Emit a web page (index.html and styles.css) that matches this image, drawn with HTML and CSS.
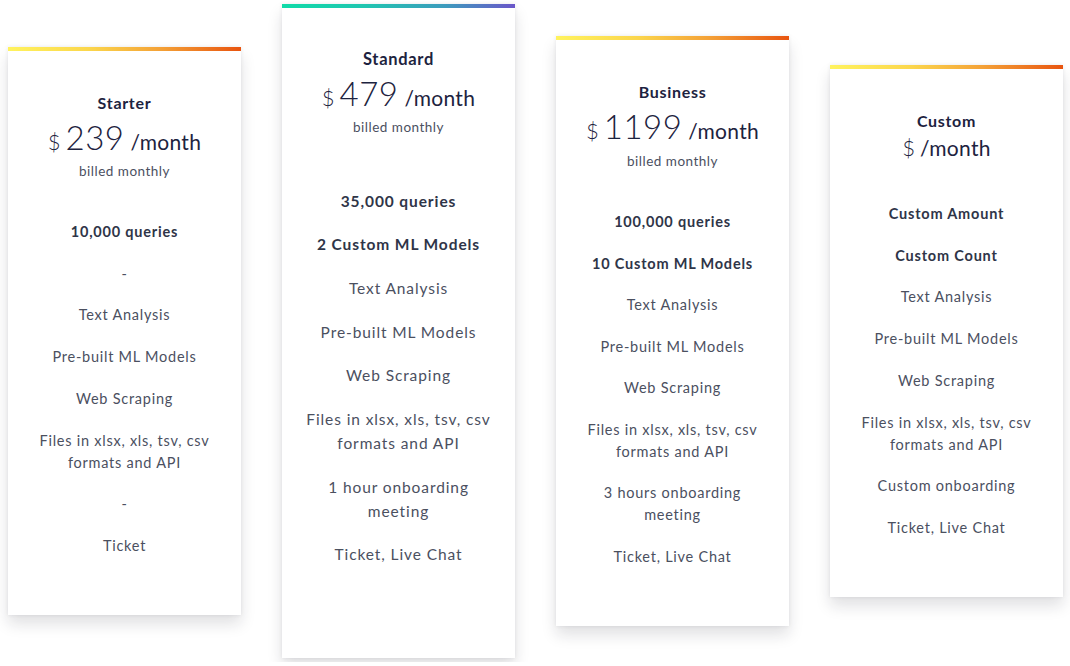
FILE: index.html
```html
<!DOCTYPE html>
<html lang="en">
<head>
<meta charset="utf-8">
<title>Pricing</title>
<link rel="stylesheet" href="styles.css">
</head>
<body>
<main class="plans">
  <section class="card card-starter">
    <div class="bar bar-warm"></div>
    <div class="card-body">
      <h2 class="plan-name">Starter</h2>
      <div class="price"><span class="cur">$</span><span class="amount">239</span><span class="per">/month</span></div>
      <div class="billed">billed monthly</div>
      <ul class="features">
        <li class="strong">10,000 queries</li>
        <li>-</li>
        <li>Text Analysis</li>
        <li>Pre-built ML Models</li>
        <li>Web Scraping</li>
        <li>Files in xlsx, xls, tsv, csv<br>formats and API</li>
        <li>-</li>
        <li>Ticket</li>
      </ul>
    </div>
  </section>
  <section class="card card-standard">
    <div class="bar bar-cool"></div>
    <div class="card-body">
      <h2 class="plan-name">Standard</h2>
      <div class="price"><span class="cur">$</span><span class="amount">479</span><span class="per">/month</span></div>
      <div class="billed">billed monthly</div>
      <ul class="features">
        <li class="strong">35,000 queries</li>
        <li class="strong">2 Custom ML Models</li>
        <li>Text Analysis</li>
        <li>Pre-built ML Models</li>
        <li>Web Scraping</li>
        <li>Files in xlsx, xls, tsv, csv<br>formats and API</li>
        <li>1 hour onboarding<br>meeting</li>
        <li>Ticket, Live Chat</li>
      </ul>
    </div>
  </section>
  <section class="card card-business">
    <div class="bar bar-warm"></div>
    <div class="card-body">
      <h2 class="plan-name">Business</h2>
      <div class="price"><span class="cur">$</span><span class="amount">1199</span><span class="per">/month</span></div>
      <div class="billed">billed monthly</div>
      <ul class="features">
        <li class="strong">100,000 queries</li>
        <li class="strong">10 Custom ML Models</li>
        <li>Text Analysis</li>
        <li>Pre-built ML Models</li>
        <li>Web Scraping</li>
        <li>Files in xlsx, xls, tsv, csv<br>formats and API</li>
        <li>3 hours onboarding<br>meeting</li>
        <li>Ticket, Live Chat</li>
      </ul>
    </div>
  </section>
  <section class="card card-custom">
    <div class="bar bar-warm"></div>
    <div class="card-body">
      <h2 class="plan-name">Custom</h2>
      <div class="price"><span class="cur">$</span><span class="per">/month</span></div>
      <ul class="features">
        <li class="strong">Custom Amount</li>
        <li class="strong">Custom Count</li>
        <li>Text Analysis</li>
        <li>Pre-built ML Models</li>
        <li>Web Scraping</li>
        <li>Files in xlsx, xls, tsv, csv<br>formats and API</li>
        <li>Custom onboarding</li>
        <li>Ticket, Live Chat</li>
      </ul>
    </div>
  </section>
</main>
</body>
</html>
```

FILE: styles.css
```css
* { box-sizing: border-box; }

html, body {
  margin: 0;
  padding: 0;
  background: #ffffff;
}

body {
  font-family: "Lato", "Noto Sans", sans-serif;
  color: #4b505f;
}

.plans {
  display: flex;
  align-items: center;
  gap: 41px;
  height: 662px;
  padding-left: 8px;
}

.card {
  width: 233px;
  background: #fff;
  box-shadow: 0 9px 14px rgba(20, 25, 40, 0.13), 0 0 4px rgba(20, 25, 40, 0.08);
  display: flex;
  flex-direction: column;
}

.bar { height: 4px; }
.bar-warm { background: linear-gradient(90deg, #fff35e 0%, #fbd64c 35%, #f4a237 65%, #e8540f 100%); }
.bar-cool { background: linear-gradient(90deg, #10dba8 0%, #1fc6b0 35%, #3c9bbd 70%, #6b56c9 100%); }

.card-body {
  padding: 42px 8px 58px;
  text-align: center;
}

.plan-name {
  margin: 0;
  font-size: 16px;
  line-height: 20px;
  font-weight: 700;
  color: #1d2340;
  letter-spacing: 0.7px;
}

.price {
  margin-top: 4px;
  height: 40px;
  display: flex;
  justify-content: center;
  align-items: baseline;
  color: #1d2340;
  line-height: 40px;
}
.cur { font-size: 22px; font-weight: 300; margin-right: 5px; }
.amount { font-size: 33px; font-weight: 300; margin-right: 6px; letter-spacing: 0.5px; }
.per { font-size: 21px; font-weight: 400; letter-spacing: 0.3px; }

.billed {
  margin-top: 5px;
  font-size: 13.5px;
  line-height: 18px;
  color: #4b505f;
  letter-spacing: 0.5px;
}

.features {
  list-style: none;
  margin: 41px 0 0;
  padding: 0;
  display: flex;
  flex-direction: column;
  gap: 19.7px;
}

.features li {
  font-size: 14.5px;
  line-height: 22px;
  letter-spacing: 0.75px;
  color: #4b505f;
}

.features li.strong {
  font-weight: 700;
  color: #2f3548;
  letter-spacing: 0.8px;
}

.card-standard .card-body { padding-top: 41px; padding-bottom: 92px; }
.card-standard .features { margin-top: 53px; gap: 19.7px; }
.card-standard .features li { font-size: 15.5px; line-height: 24px; letter-spacing: 0.9px; }
.card-standard .plan-name { font-size: 16.5px; }

.card-business .billed { margin-top: 6px; }
.card-business .features { gap: 19.6px; }

.card-custom .price { margin-top: -3px; }
.card-custom .features { margin-top: 35px; gap: 19.8px; }
```
